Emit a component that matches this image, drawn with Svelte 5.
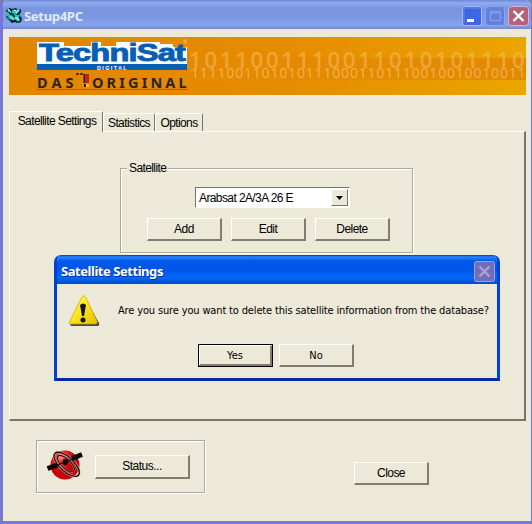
<script>
  const tabs = ['Satellite Settings', 'Statistics', 'Options'];
  const actions = ['Add', 'Edit', 'Delete'];
</script>

<div class="window">
  <header class="titlebar">
    <svg class="appicon" width="18" height="18" viewBox="0 0 18 18">
      <path d="M2 2l3-1 2 1 4-1 2 2 3-1v3l-2 3 3 3-1 4-3 1-3-1-3 1-3-3-3-3 2-3-2-3z" fill="#071d2c" />
      <path d="M2 2l3 2 1 3 3-1 3-4 3 1-3 4-2 2 4 2 1 3-3 1-3-3-4 1-3-3 2-2z" fill="#18a9a4" />
      <path d="M1 5h5v4H2zM9 8h5v4h-4zM7 3h4v3H7z" fill="#2abeb9" />
      <path d="M3 2l3 4M9 3l2 1M5 9l4 4M10 10l4 3M11 6l3-3" stroke="#83f4e6" stroke-width="1.7" />
      <path d="M7 7l3 3M4 5l2 3M9 13l3 2" stroke="#06171d" stroke-width="1.4" />
    </svg>
    <h1>Setup4PC</h1>
    <div class="controls">
      <svg width="20" height="20" viewBox="0 0 20 20">
        <rect x=".5" y=".5" width="19" height="19" rx="3" fill="#3b66e4" stroke="#a9baf0" />
        <path d="M2 17V2h16" fill="none" stroke="#6388ef" />
        <rect x="5" y="13" width="7" height="3" fill="#fff" />
      </svg>
      <svg width="20" height="20" viewBox="0 0 20 20">
        <rect x=".5" y=".5" width="19" height="19" rx="3" fill="#6380dc" stroke="#8ea5ea" />
        <path d="M5.500 5.500h10v9h-10zM5 7h11" fill="none" stroke="#8ca3ea" />
      </svg>
      <svg width="21" height="20" viewBox="0 0 21 20">
        <rect x=".5" y=".5" width="20" height="19" rx="3" fill="#b46278" stroke="#d5b7d0" />
        <path d="M5.500 5l10 10M15.500 5l-10 10" stroke="#fff" stroke-width="2.4" />
      </svg>
    </div>
  </header>

  <div class="content">
    <svg class="banner" width="517" height="58" viewBox="0 0 517 58">
      <defs>
        <linearGradient id="orange">
          <stop offset="0" stop-color="#e28500" />
          <stop offset=".55" stop-color="#e68c00" />
          <stop offset="1" stop-color="#eba500" />
        </linearGradient>
        <linearGradient id="band">
          <stop offset=".4" stop-color="#dd7900" stop-opacity="0" />
          <stop offset="1" stop-color="#dc7900" stop-opacity=".65" />
        </linearGradient>
      </defs>
      <rect width="517" height="58" fill="url(#orange)" />
      <rect y="21" width="517" height="22" fill="url(#band)" />
      <g fill="#f5b95c" font-family="Noto Sans, sans-serif">
        <text x="180" y="31" font-size="22" font-weight="500" stroke="#f5b95c" stroke-width=".4" textLength="335" opacity=".58">1011001110011010101110</text>
        <text x="182" y="40.500" font-size="14" textLength="334" opacity=".8">11110011010101110001101110010010010011</text>
      </g>
      <path d="M28 5h27v4h27V5h10v4h15V5h44v2h13v3h14v22h-150z" fill="#f8fbff" />
      <rect x="28" y="27" width="150" height="6" fill="#075eb5" />
      <path d="M28 26.500h150" stroke="#fff" />
      <text x="30" y="24" fill="#075eb5" stroke="#075eb5" stroke-width=".9" font-family="Liberation Sans, sans-serif" font-weight="bold" font-size="24" textLength="146" lengthAdjust="spacingAndGlyphs">TechniSat</text>
      <text x="88" y="32.500" fill="#fff" font-family="Liberation Sans, sans-serif" font-weight="bold" font-size="5.500" textLength="29">DIGITAL</text>
      <text x="174" y="7" fill="#f5d5a4" font-family="Liberation Sans, sans-serif" font-size="6">®</text>
      <g fill="#292421" font-family="Noto Sans, sans-serif" font-weight="bold" font-size="14.500">
        <text x="28" y="50.500" textLength="36">DAS</text>
        <text x="83" y="50.500" textLength="94">ORIGINAL</text>
      </g>
      <path d="M67 37h7" stroke="#503018" stroke-width="2" stroke-dasharray="3 1" />
      <path d="M74.500 37h2v9h-2z" fill="#24201e" /><path d="M76.500 37h3.500v9h-3.500z" fill="#d71920" />
      <path d="M75 47h5v3h-5z" fill="#ffc400" /><path d="M75 47h2v3h-2z" fill="#24201e" />
      <path d="M28 52.500h150" stroke="#a86813" />
    </svg>

    <nav>
      {#each tabs as tab, i}
        <button class="tab" class:active={i === 0}><span>{tab}</span></button>
      {/each}
    </nav>

    <main>
      <fieldset>
        <legend>Satellite</legend>
        <div class="select">
          <span>Arabsat 2A/3A 26 E</span>
          <div class="arrow"><svg width="7" height="4" viewBox="0 0 7 4"><path d="M0 0h7L3.500 4z" /></svg></div>
        </div>
        <div class="actions">
          {#each actions as action}
            <button class="push">{action}</button>
          {/each}
        </div>
      </fieldset>
    </main>

    <footer>
      <div class="status">
        <svg width="38" height="32" viewBox="0 0 38 32">
          <defs><radialGradient id="ball" cx=".35" cy=".22"><stop offset="0" stop-color="#ff9c88" /><stop offset=".35" stop-color="#ef2424" /><stop offset="1" stop-color="#c80008" /></radialGradient></defs>
          <circle cx="19" cy="16" r="14.500" fill="url(#ball)" />
          <g transform="rotate(43 20 16)" fill="none">
            <ellipse cx="20" cy="15" rx="16" ry="7" stroke="#e2b8b0" stroke-width="2.600" />
            <ellipse cx="20" cy="15" rx="16" ry="7" stroke="#210909" stroke-width="1.400" />
            <ellipse cx="19" cy="15" rx="11" ry="4.500" stroke="#d99" stroke-width="1.800" />
            <ellipse cx="19" cy="15" rx="11" ry="4.500" stroke="#250808" stroke-width="1.100" />
          </g>
          <path d="M1.500 19.500l10-3.500M26 9.500l10-4" stroke="#090909" stroke-width="5" />
          <path d="M11 16l16-6" stroke="#240808" stroke-width="1.200" /><circle cx="19.500" cy="13" r="3" fill="#130505" />
        </svg>
        <button class="push statusbutton">Status...</button>
      </div>
      <button class="push close">Close</button>
    </footer>
  </div>

  <section class="dialog">
    <header>
      <h2>Satellite Settings</h2>
      <svg width="21" height="21" viewBox="0 0 21 21">
        <rect x=".5" y=".5" width="20" height="20" rx="2" fill="#716eb7" stroke="#9ba0da" />
        <path d="M5.500 5.500l10 10M15.500 5.500l-10 10" stroke="#a6a4d9" stroke-width="2.400" />
      </svg>
    </header>
    <div class="dialogbody">
      <div class="message">
        <svg width="33" height="33" viewBox="0 0 33 33">
          <defs><linearGradient id="yellow" x2="1" y2="1"><stop stop-color="#fff88c" /><stop offset=".35" stop-color="#ffed25" /><stop offset="1" stop-color="#e6bf00" /></linearGradient></defs>
          <path d="M17 3L31 28Q32 31 29 31H4Q1 31 3 27z" fill="#4d4657" />
          <path d="M14 2Q16-1 18 3L29 26Q30 29 27 29H3Q0 29 2 26z" fill="url(#yellow)" stroke="#c8a500" stroke-width=".7" />
          <path d="M12 10Q15 7 18 10L16 21h-2z" fill="#151515" /><circle cx="15" cy="25" r="2.500" fill="#151515" />
        </svg>
        <p>Are you sure you want to delete this satellite information from the database?</p>
      </div>
      <div class="choices">
        <div class="default"><button class="push">Yes</button></div>
        <button class="push">No</button>
      </div>
    </div>
  </section>
</div>

<style>
  :global(body) { background: #777faf; }
  .window, .window * { box-sizing: border-box; }
  .window { position: relative; width: 532px; height: 524px; overflow: hidden; background: #ece9d8; border: solid #7578d7; border-width: 0 1px 3px 3px; border-radius: 7px 7px 0 0; font: 12px/14px "Liberation Sans", Arial, sans-serif; letter-spacing: -.6px; color: #000; }
  svg { display: block; flex-shrink: 0; }
  h1, h2, p { margin: 0; }
  button { margin: 0; padding: 0; border: 0; font: inherit; letter-spacing: inherit; color: inherit; background: #ece9d8; }
  .titlebar { height: 29px; margin-left: -3px; margin-right: -1px; padding: 2px 3px 0 5px; display: flex; align-items: center; background: linear-gradient(#6c87d5, #91acee 3px, #7995df 8px, #7c99e3 18px, #86a5ef 25px, #7888c9); }
  h1 { margin-left: 1px; flex: 1; color: #e2e9fd; font: bold 13px/18px "Noto Sans", sans-serif; letter-spacing: -.3px; }
  .controls { display: flex; gap: 3px; }
  .content { padding: 8px 5px 0 6px; }
  nav { height: 36px; display: flex; align-items: flex-end; padding-top: 16px; }
  .tab { height: 18px; white-space: nowrap; border-top: 1px solid #fff; border-left: 1px solid #fff; border-right: 1px solid #77756b; border-radius: 2px 2px 0 0; }
  .tab.active { position: relative; height: 21px; margin-bottom: -1px; width: 94px; padding: 0 0 2px 2px; }
  .tab:nth-child(2) { width: 52px; }
  .tab:nth-child(3) { width: 48px; }
  main { width: 517px; height: 290px; padding: 36px 0 0 110px; border: solid #fff; border-width: 1px 2px 2px 1px; border-right-color: #77756b; border-bottom-color: #77756b; }
  fieldset { position: relative; width: 293px; height: 85px; margin: 0; padding: 18px 0 0 74px; border: 1px solid #aca899; box-shadow: 1px 1px #fff, inset 1px 1px #fff; }
  legend { position: absolute; left: 6px; top: -8px; padding: 0 2px; background: #ece9d8; }
  .select { width: 155px; height: 21px; display: flex; justify-content: space-between; padding: 1px; background: #fff; border: 1px solid #77756b; border-right-color: #fff; border-bottom-color: #fff; line-height: 18px; letter-spacing: -.6px; }
  .select span { padding-left: 2px; white-space: nowrap; }
  .arrow { width: 17px; height: 17px; display: grid; place-items: center; background: #ece9d8; border: 1px solid #fff; border-right-color: #77756b; border-bottom-color: #77756b; }
  .push { width: 75px; height: 23px; border: solid; border-width: 1px 2px 2px 1px; border-color: #fff #817e70 #817e70 #fff; line-height: 19px; letter-spacing: -.55px; }
  .push:first-child { letter-spacing: -.4px; }
  .actions { display: flex; gap: 9px; margin: 10px 0 0 -48px; }
  footer { display: flex; align-items: flex-start; padding: 19px 0 0 27px; }
  .status { display: flex; width: 169px; height: 53px; padding: 8px 0 0 9px; border: 1px solid #aca899; box-shadow: 1px 1px #fff, inset 1px 1px #fff; }
  .statusbutton { width: 95px; height: 24px; margin: 6px 0 0 11px; letter-spacing: -.5px; }
  .close { margin: 22px 0 0 149px; }
  .dialog { position: absolute; left: 51px; top: 255px; width: 446px; height: 126px; border: 3px solid #0041d2; border-top: 0; border-bottom-color: #0028a9; border-radius: 7px 7px 0 0; background: #ece9d8; overflow: hidden; }
  .dialog header { height: 29px; margin: 0 -3px; padding: 3px 5px 0 7px; display: flex; align-items: center; justify-content: space-between; background: linear-gradient(#0038b9, #2885ff 2px, #0059e8 6px, #0056e6 14px, #0068fb 23px, #0049cf); }
  h2 { color: #fff; font: bold 13px/20px "Noto Sans", sans-serif; letter-spacing: -.45px; text-shadow: 1px 1px #0b328b; }
  .dialogbody { padding: 11px 11px 0; }
  .message { display: flex; height: 49px; }
  .message p { padding: 9px 0 0 17px; white-space: nowrap; font: 11px/14px "DejaVu Sans Condensed", "DejaVu Sans", sans-serif; letter-spacing: -.15px; }
  .choices { display: flex; gap: 6px; padding-left: 130px; }
  .choices .push { font: 11px/19px "DejaVu Sans Condensed", "DejaVu Sans", sans-serif; letter-spacing: 0; }
  .default { width: 75px; height: 23px; border: 1px solid #000; }
  .default .push { width: 73px; height: 21px; }
</style>
